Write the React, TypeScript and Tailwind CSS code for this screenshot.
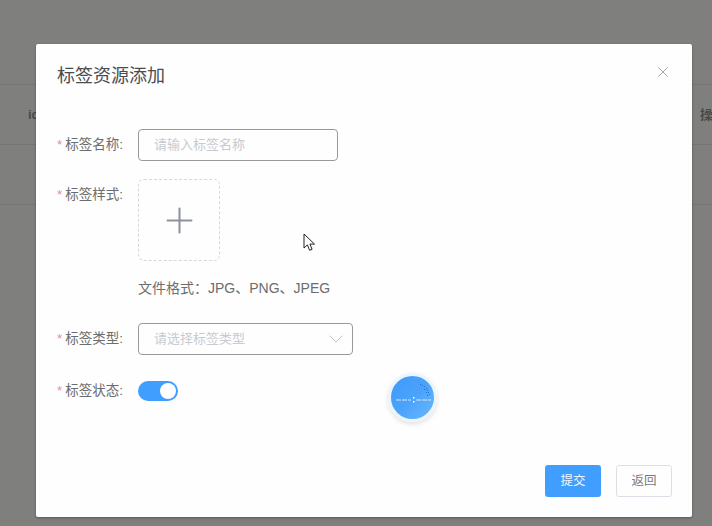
import { ChevronDown, Plus, X } from 'lucide-react'

const font = { fontFamily: '"Liberation Sans", "Noto Sans CJK SC", sans-serif' }

const ballDots = [
  [29, 8], [31, 9], [33, 10], [35, 12], [36, 14], [37, 16], [38, 18], [33, 13], [35, 16], [36, 19],
]

function Label({ text }: { text: string }) {
  return (
    <div className="w-[102px] shrink-0 pl-[21px] text-[13.5px] leading-[20px] text-[#6b6d70] whitespace-nowrap">
      <span className="mr-[3px] text-[#ee8a8a]">*</span>
      {text}:
    </div>
  )
}

function Cursor() {
  return (
    <svg className="absolute left-[303px] top-[233px]" width="13" height="19" viewBox="0 0 13 19">
      <path
        d="M1 1v14l3.4-3.1 2.2 5.4 2.5-1-2.2-5.2h4.6z"
        fill="#fff"
        stroke="#222"
        strokeWidth="1"
        strokeLinejoin="miter"
      />
    </svg>
  )
}

export default function App() {
  return (
    <div className="relative w-[712px] h-[526px] overflow-hidden bg-[#7f807e]" style={font}>
      {/* Table behind the mask */}
      <div className="pt-[84px] text-[13px] text-[#4a4b4a]">
        <div className="flex h-[61px] items-center justify-between border-y border-[#757674] pl-[28px]">
          <span className="font-bold">id</span>
          <span className="font-bold w-[12px] overflow-hidden whitespace-nowrap">操作</span>
        </div>
        <div className="h-[60px] border-b border-[#757674]" />
      </div>

      {/* Dialog */}
      <div className="absolute left-[36px] top-[44px] flex h-[473px] w-[656px] flex-col rounded-[2px] bg-[#fefefe] shadow-[0_1px_3px_rgba(0,0,0,0.3)]">
        <div className="flex items-start justify-between pl-[21px] pr-[20px] pt-[20px]">
          <h2 className="text-[18px] leading-[24px] text-[#4a4c50]">标签资源添加</h2>
          <X className="-mt-[1px] text-[#909399]" size={18} strokeWidth={1.1} />
        </div>

        <div className="mt-[41px] flex flex-col">
          <div className="flex items-center">
            <Label text="标签名称" />
            <div className="flex h-[32px] w-[200px] items-center rounded-[4px] border border-[#979a9d] pl-[15px] text-[13px] text-[#c8cad0]">
              请输入标签名称
            </div>
          </div>

          <div className="mt-[18px] flex items-start">
            <div className="pt-[6px]">
              <Label text="标签样式" />
            </div>
            <div className="flex flex-col">
              <div className="flex h-[82px] w-[82px] items-center justify-center rounded-[6px] border border-dashed border-[#d5d7da]">
                <Plus className="text-[#8c939d]" size={41} strokeWidth={1.2} />
              </div>
              <div className="mt-[17px] text-[14px] leading-[20px] text-[#6b6d70]">文件格式：JPG、PNG、JPEG</div>
            </div>
          </div>

          <div className="mt-[25px] flex items-center">
            <Label text="标签类型" />
            <div className="flex h-[32px] w-[215px] items-center justify-between rounded-[4px] border border-[#979a9d] pl-[15px] pr-[4px] text-[13px] text-[#c8cad0]">
              请选择标签类型
              <ChevronDown className="text-[#c0c4cc]" size={24} strokeWidth={1} />
            </div>
          </div>

          <div className="mt-[26px] flex items-center">
            <Label text="标签状态" />
            <div className="flex h-[20px] w-[40px] items-center justify-end rounded-full bg-[#409eff] pr-[2px]">
              <div className="h-[16px] w-[16px] rounded-full bg-white" />
            </div>
          </div>
        </div>

        <div className="mt-auto flex justify-end gap-[15px] pb-[20px] pr-[20px]">
          <div className="flex h-[32px] w-[56px] items-center justify-center rounded-[3px] bg-[#409eff] text-[12.5px] text-[#f0f6ff]">
            提交
          </div>
          <div className="flex h-[32px] w-[56px] items-center justify-center rounded-[3px] border border-[#dcdfe6] text-[12.5px] text-[#77797c]">
            返回
          </div>
        </div>
      </div>

      {/* Floating ball */}
      <div className="absolute left-[388px] top-[373px] h-[49px] w-[49px] rounded-full border-[3px] border-[#eaf5fe] bg-[linear-gradient(135deg,#3f9bf8,#4aa2fb_50%,#6ab9fd)] shadow-[0_2px_5px_rgba(0,0,0,0.12)]">
        <svg width="43" height="43" viewBox="0 0 43 43">
          <path d="M5 24h15M25 24h15" stroke="#d5e9fd" strokeWidth="1" strokeDasharray="5 1" />
          <rect x="22" y="21" width="1.5" height="1.5" fill="#fff" />
          <rect x="22" y="25" width="1.5" height="1.5" fill="#fff" />
          {ballDots.map(([x, y]) => (
            <rect key={`${x}-${y}`} x={x} y={y} width="1" height="1" fill="#1f6fc4" />
          ))}
        </svg>
      </div>

      <Cursor />
    </div>
  )
}
